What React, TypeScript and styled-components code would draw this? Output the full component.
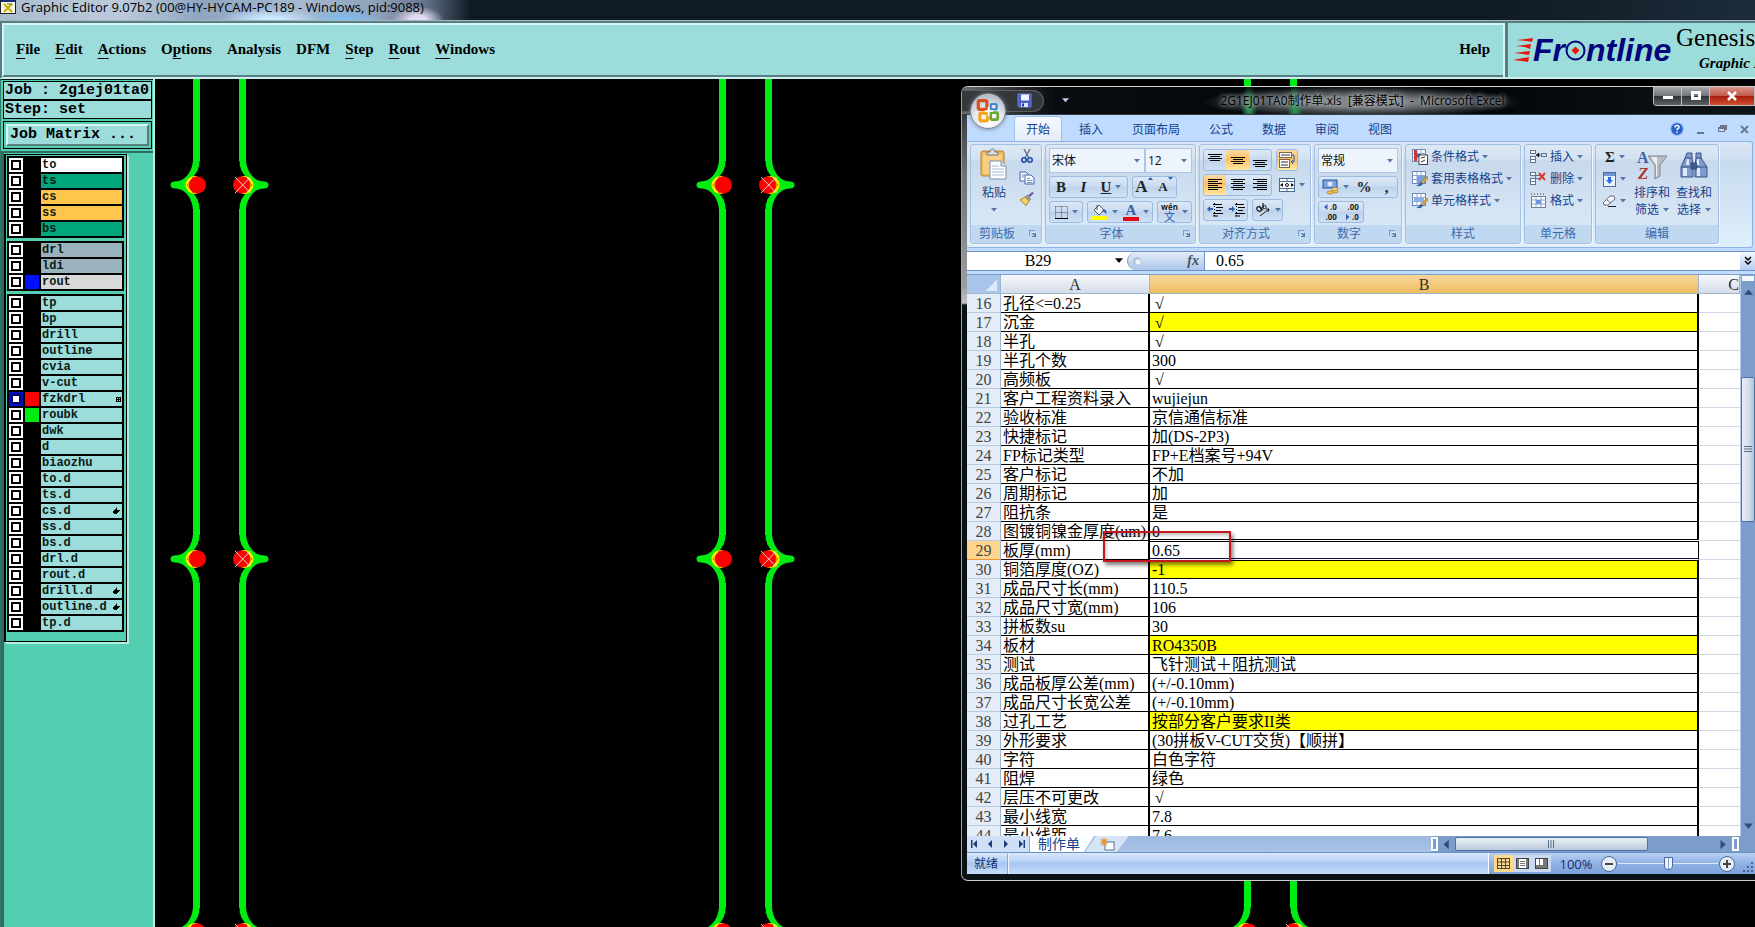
import React from "react";
import styled, { createGlobalStyle, css } from "styled-components";

const Global = createGlobalStyle`
  html, body, #root { height: 100%; }
  body { margin: 0; overflow: hidden; background: #000; }
  *, *::before, *::after { box-sizing: border-box; }
  button, input, select { font: inherit; color: inherit; margin: 0; padding: 0; border: 0; background: none; border-radius: 0; }
`;

const ui = `"Open Sans", "Noto Sans CJK SC", sans-serif`;
const song = `"Liberation Serif", "Noto Sans CJK SC", serif`;
const teal = "#9cdcda";

/* ---------- editor window ---------- */

const Desktop = styled.div`
  position: relative;
  display: flex;
  flex-direction: column;
  min-height: 100vh;
  height: 100%;
  overflow: hidden;
  background: #000;
`;

const EditorTitle = styled.header`
  display: flex;
  align-items: flex-start;
  gap: 5px;
  height: 21px;
  overflow: hidden;
  font: 12px/14px ${ui};
  color: #000;
  border-bottom: 1px solid #a9b8c2;
  background:
    radial-gradient(ellipse 26px 14px at 418px 20px, #e4dcf2 30%, transparent 100%),
    radial-gradient(ellipse 40px 12px at 345px 20px, #7cbcf0 10%, transparent 100%),
    radial-gradient(ellipse 50px 12px at 270px 20px, #cdeaff 20%, transparent 100%),
    linear-gradient(90deg, #a9bccd 0, #bccbdc 120px, #8fa5bf 200px, #a5bad2 300px, #8f9fb8 380px, #64748a 425px, #101a24 470px, #0f1a24 85%, #1c2c3a 100%);
`;

const EditorName = styled.h1`
  margin: 0;
  font: inherit;
  font-size: 13px;
  white-space: nowrap;
`;

const TopBars = styled.div`
  display: flex;
  height: 58px;
  border-top: 2px solid #567e80;
  border-bottom: 2px solid #c9f0ee;
  border-left: 2px solid #567e80;
  background: ${teal};
`;

const MenuBar = styled.nav`
  display: flex;
  flex: 1;
  align-items: center;
  gap: 15px;
  min-width: 0;
  padding: 0 13px 2px 12px;
  font: bold 15px/20px "Liberation Serif", serif;
  border-top: 2px solid #d6f6f4;
  border-left: 2px solid #d6f6f4;
  border-right: 2px solid #567e80;
  border-bottom: 2px solid #567e80;
`;

const MenuButton = styled.button<{ $last?: boolean }>`
  white-space: nowrap;
  ${(p) => p.$last && css`margin-left: auto;`}
  u { text-decoration-thickness: 1px; text-underline-offset: 4px; text-decoration-skip-ink: none; }
`;

const LogoPanel = styled.div`
  display: flex;
  width: 250px;
  padding-left: 5px;
  overflow: hidden;
  border-left: 3px solid #567e80;
  box-shadow: -2px 0 0 #d6f6f4;
`;

const LogoMark = styled.div`
  display: flex;
  align-items: center;
  flex: none;
  width: 163px;
  font: italic bold 32px/54px "Liberation Sans", sans-serif;
  color: #04047c;
`;

const LogoText = styled.div`
  flex: none;
  display: flex;
  flex-direction: column;
`;

const Product = styled.div`
  font: 25px/30px "Liberation Serif", serif;
`;

const ProductSub = styled.div`
  padding-left: 23px;
  font: italic bold 15px/20px "Liberation Serif", serif;
  white-space: nowrap;
`;

const Work = styled.div`
  display: flex;
  flex: 1;
  min-height: 0;
`;

const Sidebar = styled.aside`
  flex: none;
  width: 155px;
  background: #53ceb0;
  border-left: 1px solid #2f7a69;
  border-right: 2px solid #b0f0e0;
  font-family: "Liberation Mono", monospace;
`;

const JobPanel = styled.div`
  padding: 1px 1px 2px 2px;
  border: solid #001a10;
  border-width: 1px 0 0;
  border-bottom: 2px solid #2f6b60;
`;

const JobLine = styled.div`
  padding-left: 1px;
  font-size: 15px;
  font-weight: bold;
  line-height: 17px;
  white-space: nowrap;
  border: 1px solid #000;
  background: ${teal};
`;

const MatrixFrame = styled.div`
  margin-top: 2px;
  padding: 2px;
  border: 1px solid #000;
`;

const MatrixButton = styled.button`
  display: block;
  width: 100%;
  padding-left: 2px;
  font-size: 15px;
  font-weight: bold;
  line-height: 18px;
  text-align: left;
  background: ${teal};
  border: 2px solid #d6f6f4;
  border-right-color: #567e80;
  border-bottom-color: #567e80;
`;

const LayerWell = styled.div`
  height: 100%;
  border-left: 3px solid #35685f;
  padding-top: 1px;
`;

const LayerFrame = styled.div`
  display: flex;
  flex-direction: column;
  gap: 3px;
  width: 123px;
  padding: 1px 2px 9px 1px;
  border: 1px solid #000;
  border-left-width: 2px;
  box-shadow: 1px 1px 0 #b0f0e0, 2px 2px 0 #b0f0e0;
`;

const LayerGroup = styled.ul`
  display: flex;
  flex-direction: column;
  gap: 2px;
  margin: 0;
  padding: 2px;
  list-style: none;
  background: #000;
`;

const LayerRow = styled.li`
  display: grid;
  grid-template-columns: 14px 14px 1fr;
  gap: 2px;
  height: 14px;
`;

const LayerCheck = styled.input<{ $active?: boolean }>`
  appearance: none;
  width: 14px;
  height: 14px;
  background: #fff;
  box-shadow: inset 0 0 0 2px ${(p) => (p.$active ? "#0010c0" : "#fff")}, inset 0 0 0 4px ${(p) => (p.$active ? "#000070" : "#000")};
`;

const Swatch = styled.span<{ $color: string }>`
  background: ${(p) => p.$color};
`;

const LayerName = styled.label<{ $bg: string }>`
  display: flex;
  align-items: center;
  justify-content: space-between;
  padding: 0 1px;
  font-size: 12px;
  font-weight: bold;
  line-height: 14px;
  color: #0a1a18;
  background: ${(p) => p.$bg};
`;

const Board = styled.svg`
  flex: 1;
  min-width: 0;
  height: 100%;
  background: #000;
`;

type Layer = { n: string; bg?: string; c?: string; mark?: "hand" | "grid" };

const layerGroups: Layer[][] = [
  [
    { n: "to", bg: "#ffffff" },
    { n: "ts", bg: "#00a67c" },
    { n: "cs", bg: "#ffc64e" },
    { n: "ss", bg: "#ffc64e" },
    { n: "bs", bg: "#00a67c" },
  ],
  [
    { n: "drl", bg: "#9bb3bd" },
    { n: "ldi", bg: "#9bb3bd" },
    { n: "rout", bg: "#d9d9d9", c: "#0010ff" },
  ],
  [
    { n: "tp" }, { n: "bp" }, { n: "drill" }, { n: "outline" }, { n: "cvia" }, { n: "v-cut" },
    { n: "fzkdrl", c: "#ff0000", mark: "grid" },
    { n: "roubk", c: "#00ec12" },
    { n: "dwk" }, { n: "d" }, { n: "biaozhu" }, { n: "to.d" }, { n: "ts.d" },
    { n: "cs.d", mark: "hand" },
    { n: "ss.d" }, { n: "bs.d" }, { n: "drl.d" }, { n: "rout.d" },
    { n: "drill.d", mark: "hand" },
    { n: "outline.d", mark: "hand" },
    { n: "tp.d" },
  ],
];

const HandMark = () => (
  <svg width="8" height="8" viewBox="0 0 8 8">
    <path d="M3 1L4 0V3H7V4H6V5H5V6H4V7H1V6H0V4H1V3H2V2H3Z" fill="#000" />
  </svg>
);
const GridMark = () => (
  <svg width="5" height="5" viewBox="0 0 5 5" shapeRendering="crispEdges">
    <path d="M0 0h5v5H0zM1 1v1h1V1zM3 1v1h1V1zM1 3v1h1V3zM3 3v1h1V3z" fill="#000" fillRule="evenodd" />
  </svg>
);

const Half = () => (
  <>
    <path
      d="M-3.500 -25C-4 -14 -11 -5 -18 -4C-21 -3.500 -26 -4 -26 0C-26 4 -21 3.500 -18 4C-11 5 -4 14 -3.500 25H3.500C3 14 -2 9 -8 4V-4C-2 -9 3 -14 3.500 -25Z"
      fill="#00ec12"
    />
    <path d="M3.500 -24V-20M2.500 -18V-15M1 -13L-1 -10M3.500 24V20M2.500 18V15M1 13L-1 10" stroke="#000" strokeWidth="1" fill="none" />
    <circle cx="-2" cy="0" r="9" fill="#ffe600" />
    <circle cx="1" cy="0" r="8.500" fill="#ff0000" />
    <path d="M-3 -8L-9 0L-3 8" stroke="#b00000" strokeDasharray="2 1" fill="none" />
  </>
);

const BoardView = () => (
  <Board aria-label="board">
    <g transform="translate(-155 -79)">
      {[196.5, 722.5, 1247.5].map((x) => (
        <g key={x} transform={`translate(${x} 0)`}>
          {[0, 46].map((dx) => (
            <g key={dx} fill="#00ec12">
              <rect x={dx - 3.5} y="79" width="7" height="82" />
              <rect x={dx - 3.5} y="209" width="7" height="326" />
              <rect x={dx - 3.5} y="583" width="7" height="325" />
            </g>
          ))}
          {[185, 559, 932].map((y) => (
            <g key={y} transform={`translate(0 ${y})`}>
              <Half />
              <g transform="translate(46 0) scale(-1 1)"><Half /></g>
              <path d="M38.500 -8L54 8M54 -8L38.500 8" stroke="#d8d8d8" strokeWidth="1" />
            </g>
          ))}
        </g>
      ))}
    </g>
  </Board>
);

/* ---------- spreadsheet window ---------- */

const Excel = styled.section`
  position: absolute;
  left: 961px;
  right: 0;
  top: 86px;
  bottom: 46px;
  display: flex;
  flex-direction: column;
  border-top: 1px solid #cfd4d6;
  border-left: 1px solid #9aa4a8;
  border-bottom: 1px solid #c8cccf;
  border-radius: 7px 0 0 7px;
  background: linear-gradient(180deg, #202326 0, #6f7477 90px, #9b9fa1 200px, #c4c6c8 216px, #0b1216 218px, #0b1216 100%);
  font: 12px/16px ${ui};
  color: #15428b;
`;

const XTitle = styled.header`
  display: flex;
  height: 27px;
  border-radius: 6px 0 0 0;
  background:
    radial-gradient(ellipse 8px 22px at 287px 20px, #2a8c50 20%, transparent 100%),
    radial-gradient(ellipse 8px 22px at 333px 20px, #2a8c50 20%, transparent 100%),
    radial-gradient(ellipse 160px 16px at 400px 15px, #7c8286 30%, transparent 100%),
    linear-gradient(90deg, #6a6e70 0, #24282a 60px, #0a0d0f 90px, #000408 60%, #0e1418 100%);
`;

const QuickBar = styled.div`
  display: flex;
  align-items: center;
  gap: 18px;
  width: 110px;
`;

const QuickPill = styled.span`
  display: flex;
  align-items: center;
  justify-content: flex-end;
  width: 82px;
  height: 22px;
  padding-right: 11px;
  border: 1px solid #5a6064;
  border-left: 0;
  border-radius: 0 11px 11px 0;
  background: #34383b;
`;

const OfficeOrb = styled.button`
  position: absolute;
  left: 8px;
  top: 6px;
  width: 36px;
  height: 36px;
  display: grid;
  place-items: center;
  border-radius: 18px;
  border: 1px solid #7c868e;
  background: radial-gradient(circle at 50% 80%, #fff 0, #e6eaef 45%, #b4bcc6 80%, #eef1f4 100%);
  box-shadow: 0 0 4px #6a747e;
`;

const XName = styled.h2`
  flex: 1;
  margin: 0;
  min-width: 0;
  text-align: center;
  white-space: pre;
  font: 12px/27px ${ui};
  color: #000;
  text-shadow: 0 0 4px #b8bcc0, 0 0 6px #a8aeb2;
`;

const WinButtons = styled.div`
  display: flex;
  height: 19px;
  width: 102px;
  border: 1px solid #b9bfc2;
  border-top: 0;
  border-right: 0;
  border-radius: 0 0 0 4px;
  overflow: hidden;
`;

const WinButton = styled.button<{ $close?: boolean }>`
  flex: ${(p) => (p.$close ? "1 1 0" : "0 0 28px")};
  display: grid;
  place-items: center;
  border-right: 1px solid #b9bfc2;
  background: ${(p) =>
    p.$close
      ? "linear-gradient(180deg, #d9938a 0, #c2594c 48%, #a41c0c 50%, #d0502e 100%)"
      : "linear-gradient(180deg, #a4a9ac 0, #70767a 48%, #2c3236 50%, #5a6064 100%)"};
`;

const XBody = styled.div`
  display: flex;
  flex: 1;
  flex-direction: column;
  min-height: 0;
  margin: 1px 0 6px 5px;
  background: #bfdbff;
`;

const Tabs = styled.nav`
  display: flex;
  align-items: flex-end;
  gap: 7px;
  height: 26px;
  padding: 0 6px 0 48px;
`;

const Tab = styled.button<{ $on?: boolean }>`
  height: 24px;
  padding: 0 11px;
  line-height: 23px;
  white-space: nowrap;
  ${(p) =>
    p.$on &&
    css`
      background: linear-gradient(180deg, #f6faff, #e2ecf8);
      border-radius: 3px 3px 0 0;
      box-shadow: 0 0 0 1px #9cc0ee;
    `}
`;

const TabTools = styled.div`
  display: flex;
  align-items: center;
  gap: 13px;
  height: 24px;
  margin-left: auto;
`;

const Ribbon = styled.div`
  display: flex;
  gap: 3px;
  height: 107px;
  margin-right: 2px;
  padding: 2px 3px;
  border: 1px solid #8db2e3;
  border-left-width: 0;
  border-radius: 3px;
  background: linear-gradient(180deg, #dbe6f4 0, #cfdff0 18px, #c7daee 20px, #dff0fb 100%);
`;

const Group = styled.section<{ $w: number }>`
  display: flex;
  flex-direction: column;
  flex: none;
  width: ${(p) => p.$w}px;
  height: 100px;
  border: 1px solid #a3c0e2;
  border-radius: 3px;
  overflow: hidden;
  background: linear-gradient(180deg, #dde8f5 0, #d3e1f1 14px, #c8d9ed 16px, #d9e8f6 80px);
  box-shadow: 1px 1px 0 #eef6fd;
`;

const GroupBody = styled.div<{ $pad?: string }>`
  display: flex;
  flex: 1;
  min-height: 0;
  padding: ${(p) => p.$pad || "3px"};
`;

const GroupLabel = styled.div<{ $launch?: boolean }>`
  display: flex;
  align-items: center;
  gap: 6px;
  height: 18px;
  padding-right: ${(p) => (p.$launch ? 4 : 0)}px;
  line-height: 18px;
  color: #3e6aaa;
  background: #c0d8f0;
  span { flex: 1; text-align: center; }
`;

const Stack = styled.div<{ $gap?: number }>`
  display: flex;
  flex-direction: column;
  gap: ${(p) => p.$gap ?? 3}px;
  flex: 1;
`;

const Line = styled.div<{ $gap?: number }>`
  display: flex;
  gap: ${(p) => p.$gap ?? 4}px;
`;

const Combo = styled.span<{ $w: number }>`
  display: flex;
  align-items: center;
  width: ${(p) => p.$w}px;
  height: 25px;
  padding: 0 4px 0 2px;
  border: 1px solid #abc6ea;
  background: #eef4fc;
  color: #111;
  select { appearance: none; flex: 1; min-width: 0; height: 23px; outline: 0; }
`;

const BtnSet = styled.div<{ $bare?: boolean }>`
  display: flex;
  height: 22px;
  overflow: hidden;
  ${(p) =>
    !p.$bare &&
    css`
      border: 1px solid #9bbbe0;
      border-radius: 3px;
      background: linear-gradient(180deg, #dce8f6 0, #cadcf1 45%, #bdd2ec 50%, #cfe1f5 100%);
    `}
`;

const Btn = styled.button<{ $w: number; $on?: boolean }>`
  display: flex;
  align-items: center;
  justify-content: center;
  gap: 4px;
  flex: none;
  width: ${(p) => p.$w}px;
  font: bold 15px/18px "Liberation Serif", serif;
  color: #222;
  ${(p) => p.$on && css`background: linear-gradient(180deg, #fbdba8 0, #fdbf66 45%, #ffe9a0 100%);`}
`;

const BigBtn = styled.button<{ $w: number }>`
  display: flex;
  flex-direction: column;
  align-items: center;
  flex: none;
  width: ${(p) => p.$w}px;
  line-height: 17px;
  span { display: flex; align-items: center; gap: 4px; height: 17px; white-space: nowrap; }
`;

const BigIcon = styled.div`
  height: 36px;
`;

const ListBtn = styled.button`
  display: flex;
  align-items: center;
  gap: 3px;
  height: 22px;
  white-space: nowrap;
`;

const FormulaBar = styled.div`
  display: flex;
  height: 20px;
  margin: 3px 0;
  background: #fff;
  border-top: 1px solid #6c93c4;
  border-bottom: 1px solid #6c93c4;
  color: #000;
  font: 16px/18px ${song};
`;

const NameBox = styled.span`
  display: flex;
  align-items: center;
  width: 160px;
  padding-right: 4px;
  input { flex: 1; min-width: 0; padding-right: 6px; text-align: center; outline: 0; height: 18px; }
`;

const FxArea = styled.span`
  display: flex;
  align-items: center;
  justify-content: space-between;
  width: 78px;
  padding: 0 5px 0 5px;
  border-radius: 9px 0 0 9px;
  border-right: 1px solid #6c93c4;
  border-left: 1px solid #7d9cc8;
  background: linear-gradient(180deg, #e3edfa, #adc6e9);
  button { font: italic bold 14px/16px "Liberation Serif", serif; color: #4a5260; }
`;

const Formula = styled.input`
  flex: 1;
  min-width: 0;
  padding: 0 11px !important;
  outline: 0;
`;

const Expander = styled.button`
  display: grid;
  place-items: center;
  width: 15px;
  background: linear-gradient(180deg, #f3f8ff, #b4cdf0);
`;

const SheetArea = styled.div`
  display: flex;
  flex: 1;
  min-height: 0;
  border-top: 1px solid #7d9fce;
  background: #fff;
`;

const SheetClip = styled.div`
  flex: 1;
  min-width: 0;
  overflow: hidden;
`;

const Sheet = styled.table`
  width: 100%;
  table-layout: fixed;
  border-collapse: separate;
  border-spacing: 0;
  color: #000;
  font: 16px/16px ${song};
  th, td { height: 19px; padding: 2px 0 0; overflow: hidden; white-space: nowrap; }
`;

const ColHead = styled.th<{ $on?: boolean; $corner?: boolean; $end?: boolean }>`
  font-weight: normal;
  color: #333;
  text-align: ${(p) => (p.$end ? "right" : "center")};
  border-right: 1px solid #9eb6ce;
  border-bottom: 1px solid #9eb6ce;
  background: ${(p) =>
    p.$on
      ? "linear-gradient(180deg, #f8d59b, #efbe62)"
      : p.$corner
        ? "linear-gradient(135deg, transparent 66%, #dbe9fb 66%) 10px 2px / 20px 14px no-repeat, #a9c4e9"
        : "linear-gradient(180deg, #f6f9fc, #d3dbe9)"};
`;

const RowHead = styled.th<{ $on?: boolean }>`
  font-weight: normal;
  color: #444;
  background: ${(p) => (p.$on ? "#ffd58d" : "#e3ecf7")};
  border-right: 1px solid #9eb6ce;
  border-bottom: 1px solid ${(p) => (p.$on ? "#f29536" : "#b9cbe0")};
`;

const CellA = styled.td`
  padding-left: 2px !important;
  border-right: 2px solid #000;
  border-bottom: 1px solid #000;
`;

const CellB = styled.td<{ $fill?: boolean; $sel?: boolean; $tick?: boolean }>`
  padding-left: ${(p) => (p.$tick ? 5 : 2)}px !important;
  border-right: 2px solid #000;
  border-bottom: 1px solid #000;
  ${(p) => p.$fill && css`background: #ffff00;`}
  ${(p) =>
    p.$sel &&
    css`
      position: relative;
      border-bottom-color: #fff;
      border-right: 1px solid #000;
      background: #fff;
      box-shadow: 0 -1px 0 #fff, 0 -2px 0 #000, inset 0 1px 0 #000, inset 0 -1px 0 #0a0a50, 0 1px 0 #000;
    `}
`;

const CellC = styled.td`
  border-bottom: 1px solid #d0d7e5;
`;

const VScroll = styled.div`
  display: flex;
  flex-direction: column;
  align-items: center;
  width: 15px;
  padding: 0 0 5px;
  background: #7c9ccb;
  border-left: 1px solid #b5cdec;
`;

const VThumb = styled.div`
  display: grid;
  place-items: center;
  width: 14px;
  height: 145px;
  margin: 80px 0 auto;
  border: 1px solid #4f6fa5;
  border-radius: 2px;
  background: linear-gradient(90deg, #e8eff8, #d3dde9 60%, #b4c4d9);
`;

const VSplit = styled.div`
  width: 14px;
  height: 7px;
  margin-bottom: 6px;
  border: 1px solid #7d9fce;
  background: #f4f8fd;
`;

const SheetTabs = styled.div`
  display: flex;
  height: 16px;
  background: linear-gradient(180deg, #9db9e0, #a8c2e6);
`;

const NavSet = styled.div`
  display: flex;
  width: 63px;
  background: #cfe0f6;
  border-right: 1px solid #8aa8d2;
`;

const NavBtn = styled.button`
  flex: 1;
  display: grid;
  place-items: center;
`;

const SheetTab = styled.button`
  width: 64px;
  padding: 0 14px 0 8px;
  font-size: 14px;
  line-height: 16px;
  white-space: nowrap;
  background: #fff;
  clip-path: polygon(0 0, 100% 0, 84% 100%, 0 100%);
`;

const NewSheet = styled.button`
  display: grid;
  place-items: center;
  width: 44px;
  margin-left: -9px;
  background: #d5e4f7;
  clip-path: polygon(25% 0, 100% 0, 72% 100%, 0 100%);
`;

const HScroll = styled.div`
  display: flex;
  align-items: center;
  gap: 4px;
  width: 324px;
  margin-left: auto;
  padding-right: 16px;
  background: #7c9ccb;
`;

const HThumb = styled.div`
  display: grid;
  place-items: center;
  width: 193px;
  height: 14px;
  border: 1px solid #4f6fa5;
  border-radius: 2px;
  background: linear-gradient(180deg, #e8eff8, #d3dde9 50%, #bac9dd);
`;

const ScrollEnd = styled.div`
  display: flex;
  align-items: center;
  gap: 4px;
  margin-left: auto;
`;

const SplitHandle = styled.div`
  width: 7px;
  height: 14px;
  border: 2px solid #fff;
  background: #7c9ccb;
`;

const Status = styled.footer`
  display: flex;
  align-items: center;
  height: 22px;
  padding-left: 7px;
  color: #15306b;
  border-top: 1px solid #6c93c4;
  background: linear-gradient(180deg, #d8e7fb 0, #bdd5f7 35%, #a8c7f1 50%, #c7defa 100%);
`;

const StatusTools = styled.div`
  display: flex;
  align-items: center;
  height: 21px;
  margin-left: auto;
  padding: 0 1px 0 5px;
  border-left: 1px solid #fff;
  background: linear-gradient(180deg, #b9d1f4 0, #8fb1e4 50%, #7da3dc 100%);
`;

const StatusRule = styled.span`
  width: 2px;
  height: 20px;
  margin-left: 9px;
  border-left: 1px solid #86a8da;
  border-right: 1px solid #eef5ff;
`;

const ViewBtn = styled.button<{ $on?: boolean }>`
  display: grid;
  place-items: center;
  width: 19px;
  height: 17px;
  background: ${(p) => (p.$on ? "#ffd98a" : "#c9daf1")};
`;

const ZoomText = styled.button`
  width: 50px;
  font: 13px/18px ${ui};
`;

const RoundBtn = styled.button`
  display: grid;
  place-items: center;
  width: 16px;
  height: 16px;
  border: 1px solid #476a9e;
  border-radius: 8px;
  background: #e6eef9;
`;

const Zoom = styled.input`
  appearance: none;
  width: 100px;
  height: 16px;
  margin: 0 1px !important;
  background: linear-gradient(#dfeafa, #dfeafa) center / 100% 1px no-repeat;
  &::-webkit-slider-thumb {
    appearance: none;
    width: 9px;
    height: 13px;
    border: 1px solid #49699c;
    border-radius: 1px 1px 5px 5px;
    background: linear-gradient(90deg, #eef4fc 3px, #8aa2c8 3px, #8aa2c8 4px, #eef4fc 4px);
  }
`;

const Grip = styled.svg`
  margin: 6px 0 0 7px;
`;

const RedMark = styled.div`
  position: absolute;
  left: 1103px;
  top: 531px;
  width: 128px;
  height: 31px;
  border: 2px solid #c4161c;
  box-shadow: 2px 3px 4px rgba(0, 0, 0, 0.5), inset 1px 2px 4px rgba(0, 0, 0, 0.3);
  pointer-events: none;
`;

/* ---------- icons ---------- */

const Arrow = ({ c = "#5577a8", dir = "down", s = 6 }: { c?: string; dir?: "down" | "up" | "left" | "right"; s?: number }) => {
  const d = { down: "M0 1H6L3 4.500Z", up: "M0 4.500H6L3 1Z", left: "M4.500 0V6L1 3Z", right: "M1 0V6L4.500 3Z" }[dir];
  return (
    <svg width={s} height={s} viewBox="0 0 6 6">
      <path d={d} fill={c} />
    </svg>
  );
};

const Bars = ({ rows, w = 14 }: { rows: [number, number, number][]; w?: number }) => (
  <svg width={w} height="14" viewBox={`0 0 ${w} 14`} shapeRendering="crispEdges">
    {rows.map(([x, y, l], i) => (
      <rect key={i} x={x} y={y} width={l} height="1" fill="#000" />
    ))}
  </svg>
);

const Launcher = () => (
  <svg width="8" height="8" viewBox="0 0 8 8" shapeRendering="crispEdges">
    <path d="M0 0H6V1H1V6H0Z" fill="#7d9cc8" />
    <path d="M7 3V7H3V6H5L2 3L3 2L6 5V3Z" fill="#5577a8" />
    <path d="M3 2H4V3H3Z" fill="#fff" />
  </svg>
);

const OfficeLogo = () => (
  <svg width="26" height="26" viewBox="0 0 24 24" fill="none">
    <rect x="3" y="2.500" width="8" height="8" rx="1.500" stroke="#d8501c" strokeWidth="3" />
    <rect x="14.500" y="5.500" width="5.500" height="5" rx="1" stroke="#3f86cf" strokeWidth="2" />
    <rect x="4.500" y="14" width="7" height="7" rx="1.500" stroke="#f2a71c" strokeWidth="3" />
    <rect x="14.500" y="13.500" width="6.500" height="6.500" rx="1" stroke="#6ca832" strokeWidth="2.500" />
    <path d="M9 12H17M12.500 8V17" stroke="#fff" strokeWidth="1.500" />
  </svg>
);

const SaveIcon = () => (
  <svg width="15" height="15" viewBox="0 0 15 15">
    <path d="M1 1H14V14H2L1 13Z" fill="#4a5fc4" stroke="#6f80d8" />
    <rect x="4" y="1.500" width="8" height="6" fill="#f2f5ff" />
    <rect x="4" y="10" width="7" height="4" fill="#dfe4fa" />
    <rect x="5" y="10.500" width="2" height="3" fill="#27348b" />
  </svg>
);

const PasteIcon = () => (
  <svg width="28" height="32" viewBox="0 0 28 32">
    <rect x="1" y="3" width="23" height="25" rx="2" fill="#f0b95a" stroke="#b98433" />
    <rect x="3" y="6" width="19" height="20" fill="#f7cf83" />
    <path d="M7 7V4H10C10 0 15 0 15 4H18V7Z" fill="#d9dde2" stroke="#70777f" />
    <path d="M10 13H21L26 18V31H10Z" fill="#fff" stroke="#7890b4" />
    <path d="M21 13V18H26" fill="#dfe8f5" stroke="#7890b4" />
    <path d="M12 18H19M12 21H24M12 24H24M12 27H24" stroke="#a9b9d2" />
  </svg>
);
const CutIcon = () => (
  <svg width="14" height="16" viewBox="0 0 14 16" fill="none">
    <path d="M4 1L9 10M10 1L5 10" stroke="#6a7484" strokeWidth="1.500" />
    <circle cx="4" cy="12" r="2.200" stroke="#2a57a8" strokeWidth="1.700" />
    <circle cx="10" cy="12" r="2.200" stroke="#2a57a8" strokeWidth="1.700" />
  </svg>
);
const CopyIcon = () => (
  <svg width="16" height="14" viewBox="0 0 16 14">
    <path d="M1 1H7L9 3V10H1Z" fill="#fff" stroke="#3f66a8" />
    <path d="M6 4H12L15 7V13H6Z" fill="#fff" stroke="#3f66a8" />
    <path d="M2.500 4H6M2.500 6H5M8 7.500H11M8 9.500H13.500M8 11.500H13.500" stroke="#6f93c9" />
  </svg>
);
const BrushIcon = () => (
  <svg width="16" height="14" viewBox="0 0 16 14">
    <path d="M15 1L11 5L9 3.500L13 0Z" fill="#6b5aa0" />
    <path d="M8 3L12 7L10 9L6 5Z" fill="#999" stroke="#666" strokeWidth=".5" />
    <path d="M6 5L10 9L7 13.500L1 8Z" fill="#f5d566" stroke="#a8872a" />
  </svg>
);
const BorderIcon = () => (
  <svg width="13" height="13" viewBox="0 0 13 13">
    <path d="M.5 .5H12.500M.5 6.500H12.500M.5 .5V12M6.500 .5V12M12.500 .5V12" stroke="#555" strokeDasharray="1 1" />
    <path d="M0 12.500H13" stroke="#000" />
  </svg>
);
const FillIcon = () => (
  <svg width="17" height="16" viewBox="0 0 17 16">
    <path d="M3 6L8 1L13 6L8 11Z" fill="#f1f4f9" stroke="#556" />
    <path d="M6 1V6" stroke="#556" />
    <path d="M12 5C15 5 16 8 15 10C14 9 13 7 11 8Z" fill="#2f62b5" />
    <rect x="0" y="12" width="16" height="4" fill="#ffff00" />
  </svg>
);
const MergeIcon = () => (
  <svg width="16" height="14" viewBox="0 0 16 14">
    <rect x=".5" y=".5" width="15" height="13" fill="#fff" stroke="#4b6a96" />
    <path d="M.5 3.500H15.500M.5 10.500H15.500M8 0V3M8 11V14" stroke="#4b6a96" />
    <path d="M1 7L4 5V9ZM15 7L12 5V9Z" fill="#111" />
    <circle cx="8" cy="7" r="1.500" stroke="#111" fill="none" />
  </svg>
);
const WrapIcon = () => (
  <svg width="16" height="16" viewBox="0 0 16 16" fill="none">
    <rect x=".5" y=".5" width="12" height="5" fill="#fff" stroke="#7a6a50" />
    <rect x=".5" y="7.500" width="10" height="8" fill="#fff" stroke="#7a6a50" />
    <path d="M2 3H11M2 10H9M2 13H9" stroke="#333" />
    <path d="M13 3H15V10H12M14 8L12 10L14 12" stroke="#2f62b5" />
  </svg>
);
const IndentIcon = ({ out }: { out?: boolean }) => (
  <svg width="16" height="14" viewBox="0 0 16 14">
    <path d="M6 1.500H15M9 4.500H16M9 7.500H14M6 10.500H16M6 13H11" stroke="#000" />
    <path d="M7.500 0V14" stroke="#000" strokeDasharray="1 2" />
    <path d={out ? "M0 6L3 3V5H6V7H3V9Z" : "M6 6L3 3V5H0V7H3V9Z"} fill="#2f62b5" />
  </svg>
);
const OrientIcon = () => (
  <svg width="16" height="14" viewBox="0 0 16 14" fill="none" stroke="#222">
    <path d="M5 13L14 6M14 6L11 6M14 6L13 9" />
    <ellipse cx="4" cy="6" rx="2.500" ry="2" transform="rotate(45 4 6)" strokeWidth="1.300" />
    <path d="M4 3L8 7" strokeWidth="1.300" />
    <path d="M8 0L8 5" strokeWidth="1.300" />
    <circle cx="9.500" cy="4" r="1.700" />
  </svg>
);
const MoneyIcon = () => (
  <svg width="17" height="16" viewBox="0 0 17 16">
    <rect x="1" y="1" width="14" height="8" fill="#7ea3dc" stroke="#27509b" />
    <circle cx="8" cy="5" r="2.500" fill="#dbe8fb" />
    <ellipse cx="8" cy="13.500" rx="3" ry="1.500" fill="#f4c64e" stroke="#a57813" strokeWidth=".7" />
    <ellipse cx="13" cy="12.500" rx="3" ry="1.500" fill="#f4c64e" stroke="#a57813" strokeWidth=".7" />
    <ellipse cx="13" cy="10" rx="3" ry="1.500" fill="#ffe08a" stroke="#a57813" strokeWidth=".7" />
  </svg>
);
const GridIcon = ({ kind }: { kind: "cond" | "table" | "style" }) => (
  <svg width="16" height="16" viewBox="0 0 16 16">
    <rect x=".5" y=".5" width="13" height="12" fill="#fff" stroke="#6b87b5" />
    <path d="M.5 4.500H13.500M.5 8.500H13.500M5 .5V12.500M9 .5V12.500" stroke="#8ea8d0" />
    {kind === "cond" && (
      <>
        <path d="M2 1H5V12H2Z" fill="#cc3b3b" />
        <path d="M5 5H9V8H5Z" fill="#3d67b8" />
        <rect x="7" y="6" width="8.500" height="9.500" fill="#fff" stroke="#444" />
        <path d="M9 9L13 8M9 13L13 11" stroke="#333" />
      </>
    )}
    {kind !== "cond" && (
      <>
        {kind === "table" ? <path d="M5 4.500H13V12H5Z" fill="#7d9fd8" /> : <path d="M2 4.500H12V8.500H2Z" fill="#8fb0e2" />}
        <path d="M15 5L9 11L11 13L16 7Z" fill="#dca64a" stroke="#8d6a28" strokeWidth=".6" />
        <path d="M9 11L11 13C9 16 6 15 4 15C7 14 7 12 9 11Z" fill="#2f62b5" />
      </>
    )}
  </svg>
);
const CellsIcon = ({ kind }: { kind: "ins" | "del" | "fmt" }) => (
  <svg width="17" height="16" viewBox="0 0 17 16">
    {kind === "fmt" ? (
      <>
        <rect x="1.500" y="3.500" width="14" height="11" fill="#fff" stroke="#6b7f9f" />
        <path d="M1.500 7H15.500M1.500 11H15.500M6 3.500V14.500M11 3.500V14.500" stroke="#8ea8d0" />
        <rect x="6" y="7" width="5" height="4" fill="#6c95dc" />
        <path d="M1 1H16" stroke="#333" strokeDasharray="1 2" />
      </>
    ) : (
      <>
        <rect x=".5" y="1.500" width="5" height="3" fill="#fff" stroke="#5f7292" />
        <rect x=".5" y="7.500" width="5" height="3" fill="#fff" stroke="#5f7292" />
        <rect x=".5" y="10.500" width="5" height="3" fill="#fff" stroke="#5f7292" />
        {kind === "ins" ? (
          <>
            <path d="M6 6L9 4V8ZM9 6H11" fill="#111" stroke="#111" strokeWidth=".5" />
            <rect x="11.500" y="4.500" width="5" height="3" fill="#cfe0f8" stroke="#5f7292" />
          </>
        ) : (
          <>
            <rect x="5.500" y="4.500" width="5" height="3" fill="#cfe0f8" stroke="#5f7292" />
            <path d="M9 2L15 9M15 2L9 9" stroke="#e0392b" strokeWidth="2" />
          </>
        )}
      </>
    )}
  </svg>
);
const FunnelIcon = () => (
  <svg width="30" height="32" viewBox="0 0 30 32">
    <text x="0" y="14" fontFamily="Liberation Serif" fontWeight="bold" fontSize="16" fill="#3d5fa8">A</text>
    <text x="1" y="30" fontFamily="Liberation Serif" fontWeight="bold" fontStyle="italic" fontSize="17" fill="#a83a30">Z</text>
    <path d="M11 7H30L23 16V27L18 30V16Z" fill="#b9bec5" stroke="#80868f" />
    <path d="M14 8H20L20 27L19 28V16Z" fill="#eef0f2" />
  </svg>
);
const BinocularIcon = () => (
  <svg width="30" height="32" viewBox="0 -4 30 32" fill="#7f9bcb" stroke="#3a5288">
    <path d="M8 0H13V5L14 12V24H2V14L6 5Z" />
    <path d="M17 0H22V5L28 14V24H16V12L17 5Z" />
    <rect x="12" y="10" width="6" height="6" fill="#3f5a92" />
    <path d="M4 15H8V23H4ZM18 15H21V23H18ZM8 6H10V12H7ZM18 6H20V12H18Z" fill="#dfe8f8" stroke="none" />
    <path d="M2 14H14M16 14H28M7 5H13M17 5H23" />
  </svg>
);
const DownBox = () => (
  <svg width="13" height="15" viewBox="0 0 13 15">
    <rect x=".5" y=".5" width="12" height="14" fill="#eaf2fd" stroke="#4a6ca8" />
    <rect x="1" y="1" width="11" height="3" fill="#6f95d4" />
    <path d="M5 5H8V8H10L6.500 12L3 8H5Z" fill="#2c6be0" />
  </svg>
);
const Eraser = () => (
  <svg width="14" height="12" viewBox="0 0 14 12">
    <path d="M1 8L8 1H12L13 4L6 10H2Z" fill="#f4f6fa" stroke="#5c6676" />
    <path d="M5 5L9 8" stroke="#5c6676" />
    <path d="M6 11.500H14" stroke="#222" />
  </svg>
);
const HelpIcon = () => (
  <svg width="14" height="14" viewBox="0 0 14 14">
    <circle cx="7" cy="7" r="6.200" fill="#2b62c9" stroke="#8fb0e8" />
    <path d="M5 5.500C5 3 9 3 9 5.200C9 6.700 7 6.700 7 8.200M7 9.600V11" stroke="#fff" strokeWidth="1.500" fill="none" />
  </svg>
);
const NavIcon = ({ end, flip }: { end?: boolean; flip?: boolean }) => (
  <svg width="8" height="8" viewBox="0 0 8 8">
    <g transform={flip ? "translate(8 0) scale(-1 1)" : undefined} fill="#1b3f7a">
      <path d="M6 0V8L2 4Z" />
      {end && <rect x="0" y="0" width="1.500" height="8" />}
    </g>
  </svg>
);
const SizeMark = ({ up }: { up?: boolean }) => (
  <svg width="5" height="14" viewBox="0 0 5 14">
    <path d={up ? "M0 3H5L2.500 0Z" : "M0 0H5L2.500 3Z"} fill="#2f62b5" />
  </svg>
);

const alignRows: Record<string, [number, number, number][]> = {
  top: [[0, 1, 14], [2, 3, 10], [0, 5, 14], [2, 7, 10]],
  mid: [[0, 4, 14], [2, 6, 10], [0, 8, 14], [2, 10, 10]],
  bot: [[0, 7, 14], [2, 9, 10], [0, 11, 14], [2, 13, 10]],
  left: [[0, 1, 14], [0, 3, 10], [0, 5, 14], [0, 7, 10], [0, 9, 14], [0, 11, 10]],
  center: [[0, 1, 14], [2, 3, 10], [0, 5, 14], [2, 7, 10], [0, 9, 14], [2, 11, 10]],
  right: [[0, 1, 14], [4, 3, 10], [0, 5, 14], [4, 7, 10], [0, 9, 14], [4, 11, 10]],
};

const FontA = styled.span<{ $size: number }>`
  display: flex;
  font-size: ${(p) => p.$size}px;
  line-height: 20px;
`;
const ColorA = styled.span`
  width: 16px;
  height: 18px;
  font: bold 15px/14px "Liberation Serif", serif;
  color: #3d5fa8;
  border-bottom: 4px solid #e30b13;
  text-align: center;
`;
const Wen = styled.span`
  display: flex;
  flex-direction: column;
  align-items: center;
  font: bold 8px/9px ${ui};
  b { font: 11px/11px "Noto Sans CJK SC", sans-serif; color: #2b4ea8; }
`;
const Decimals = styled.span`
  display: flex;
  flex-direction: column;
  font: bold 8px/10px ${ui};
  text-align: right;
  svg { margin-right: 1px; }
`;
const MiniButton = styled.button`
  display: grid;
  place-items: center;
`;

const rows: [number, string, string, boolean?][] = [
  [16, "孔径<=0.25", "√"],
  [17, "沉金", "√", true],
  [18, "半孔", "√"],
  [19, "半孔个数", "300"],
  [20, "高频板", "√"],
  [21, "客户工程资料录入", "wujiejun"],
  [22, "验收标准", "京信通信标准"],
  [23, "快捷标记", "加(DS-2P3)"],
  [24, "FP标记类型", "FP+E档案号+94V"],
  [25, "客户标记", "不加"],
  [26, "周期标记", "加"],
  [27, "阻抗条", "是"],
  [28, "图镀铜镍金厚度(um)", "0"],
  [29, "板厚(mm)", "0.65"],
  [30, "铜箔厚度(OZ)", "-1", true],
  [31, "成品尺寸长(mm)", "110.5"],
  [32, "成品尺寸宽(mm)", "106"],
  [33, "拼板数su", "30"],
  [34, "板材", "RO4350B", true],
  [35, "测试", "飞针测试＋阻抗测试"],
  [36, "成品板厚公差(mm)", "(+/-0.10mm)"],
  [37, "成品尺寸长宽公差", "(+/-0.10mm)"],
  [38, "过孔工艺", "按部分客户要求II类", true],
  [39, "外形要求", "(30拼板V-CUT交货)【顺拼】"],
  [40, "字符", "白色字符"],
  [41, "阻焊", "绿色"],
  [42, "层压不可更改", "√"],
  [43, "最小线宽", "7.8"],
  [44, "最小线距", "7.6"],
];

const RibbonGroup = ({ w, label, pad, launch, children }: { w: number; label: string; pad?: string; launch?: boolean; children: React.ReactNode }) => (
  <Group $w={w}>
    <GroupBody $pad={pad}>{children}</GroupBody>
    <GroupLabel $launch={launch}><span>{label}</span>{launch && <MiniButton aria-label={label}><Launcher /></MiniButton>}</GroupLabel>
  </Group>
);

const RibbonView = () => (
  <Ribbon>
    <RibbonGroup w={72} label="剪贴板" pad="3px 3px 3px 1px" launch>
      <BigBtn $w={44}>
        <BigIcon><PasteIcon /></BigIcon>
        <span>粘贴</span>
        <span><Arrow /></span>
      </BigBtn>
      <Stack $gap={7}>
        <Btn $w={22} aria-label="剪切"><CutIcon /></Btn>
        <Btn $w={22} aria-label="复制"><CopyIcon /></Btn>
        <Btn $w={22} aria-label="格式刷"><BrushIcon /></Btn>
      </Stack>
    </RibbonGroup>
    <RibbonGroup w={151} label="字体" launch>
      <Stack>
        <Line $gap={0}>
          <Combo $w={96}><select aria-label="字体"><option>宋体</option></select><Arrow /></Combo>
          <Combo $w={47}><select aria-label="字号"><option>12</option></select><Arrow /></Combo>
        </Line>
        <Line>
          <BtnSet>
            <Btn $w={22}>B</Btn>
            <Btn $w={23}><em>I</em></Btn>
            <Btn $w={32}><u>U</u><Arrow /></Btn>
          </BtnSet>
          <BtnSet>
            <Btn $w={22}><FontA $size={17}>A<SizeMark up /></FontA></Btn>
            <Btn $w={21}><FontA $size={13}>A<SizeMark /></FontA></Btn>
          </BtnSet>
        </Line>
        <Line>
          <BtnSet><Btn $w={32} aria-label="边框"><BorderIcon /><Arrow /></Btn></BtnSet>
          <BtnSet>
            <Btn $w={32} aria-label="填充"><FillIcon /><Arrow /></Btn>
            <Btn $w={32}><ColorA>A</ColorA><Arrow /></Btn>
          </BtnSet>
          <BtnSet><Btn $w={33}><Wen>wén<b>文</b></Wen><Arrow /></Btn></BtnSet>
        </Line>
      </Stack>
    </RibbonGroup>
    <RibbonGroup w={112} label="对齐方式" pad="4px 3px" launch>
      <Stack>
        <Line>
          <BtnSet>
            <Btn $w={22} aria-label="顶端对齐"><Bars rows={alignRows.top} /></Btn>
            <Btn $w={23} $on aria-label="垂直居中"><Bars rows={alignRows.mid} /></Btn>
            <Btn $w={22} aria-label="底端对齐"><Bars rows={alignRows.bot} /></Btn>
          </BtnSet>
          <BtnSet><Btn $w={20} $on aria-label="自动换行"><WrapIcon /></Btn></BtnSet>
        </Line>
        <Line>
          <BtnSet>
            <Btn $w={22} $on aria-label="左对齐"><Bars rows={alignRows.left} /></Btn>
            <Btn $w={23} aria-label="居中"><Bars rows={alignRows.center} /></Btn>
            <Btn $w={22} aria-label="右对齐"><Bars rows={alignRows.right} /></Btn>
          </BtnSet>
          <BtnSet $bare><Btn $w={31} aria-label="合并"><MergeIcon /><Arrow /></Btn></BtnSet>
        </Line>
        <Line>
          <BtnSet>
            <Btn $w={22} aria-label="减少缩进"><IndentIcon out /></Btn>
            <Btn $w={21} aria-label="增加缩进"><IndentIcon /></Btn>
          </BtnSet>
          <BtnSet><Btn $w={29} aria-label="方向"><OrientIcon /><Arrow /></Btn></BtnSet>
        </Line>
      </Stack>
    </RibbonGroup>
    <RibbonGroup w={88} label="数字" launch>
      <Stack>
        <Combo $w={80}><select aria-label="数字格式"><option>常规</option></select><Arrow /></Combo>
        <Line>
          <BtnSet>
            <Btn $w={33} aria-label="货币"><MoneyIcon /><Arrow /></Btn>
            <Btn $w={24}>%</Btn>
            <Btn $w={21}>,</Btn>
          </BtnSet>
        </Line>
        <Line>
          <BtnSet>
            <Btn $w={22} aria-label="增加小数位数"><Decimals><span><Arrow dir="left" c="#2f62b5" />.0</span><span>.00</span></Decimals></Btn>
            <Btn $w={22} aria-label="减少小数位数"><Decimals><span>.00</span><span><Arrow dir="right" c="#2f62b5" />.0</span></Decimals></Btn>
          </BtnSet>
        </Line>
      </Stack>
    </RibbonGroup>
    <RibbonGroup w={116} label="样式" pad="1px 6px">
      <Stack $gap={0}>
        <ListBtn><GridIcon kind="cond" />条件格式 <Arrow /></ListBtn>
        <ListBtn><GridIcon kind="table" />套用表格格式 <Arrow /></ListBtn>
        <ListBtn><GridIcon kind="style" />单元格样式 <Arrow /></ListBtn>
      </Stack>
    </RibbonGroup>
    <RibbonGroup w={68} label="单元格" pad="1px 5px">
      <Stack $gap={0}>
        <ListBtn><CellsIcon kind="ins" />插入 <Arrow /></ListBtn>
        <ListBtn><CellsIcon kind="del" />删除 <Arrow /></ListBtn>
        <ListBtn><CellsIcon kind="fmt" />格式 <Arrow /></ListBtn>
      </Stack>
    </RibbonGroup>
    <RibbonGroup w={124} label="编辑" pad="1px 4px 0 3px">
      <Stack $gap={0}>
        <BtnSet $bare><Btn $w={32}>Σ <Arrow /></Btn></BtnSet>
        <BtnSet $bare><Btn $w={30} aria-label="填充"><DownBox /><Arrow /></Btn></BtnSet>
        <BtnSet $bare><Btn $w={30} aria-label="清除"><Eraser /><Arrow /></Btn></BtnSet>
      </Stack>
      <BigBtn $w={42}><FindIcon><FunnelIcon /></FindIcon><span>排序和</span><span>筛选<Arrow /></span></BigBtn>
      <BigBtn $w={42}><FindIcon><BinocularIcon /></FindIcon><span>查找和</span><span>选择<Arrow /></span></BigBtn>
    </RibbonGroup>
  </Ribbon>
);

const FindIcon = styled.div`
  height: 38px;
  padding-top: 3px;
`;

const ExcelView = () => (
  <Excel>
    <XTitle>
      <QuickBar>
        <QuickPill><MiniButton aria-label="保存"><SaveIcon /></MiniButton></QuickPill>
        <MiniButton aria-label="自定义"><Arrow c="#b9cdf0" s={7} /></MiniButton>
      </QuickBar>
      <XName>{"2G1EJ01TA0制作单.xls  [兼容模式]  -  Microsoft Excel"}</XName>
      <WinButtons>
        <WinButton aria-label="最小化"><svg width="12" height="10"><rect y="5" x="1" width="10" height="3" fill="#fff" /></svg></WinButton>
        <WinButton aria-label="最大化"><svg width="12" height="10"><path d="M1 0H11V9H1ZM4 3V6H8V3Z" fill="#fff" fillRule="evenodd" /></svg></WinButton>
        <WinButton $close aria-label="关闭"><svg width="12" height="10"><path d="M2 1L10 9M10 1L2 9" stroke="#fff" strokeWidth="2.500" /></svg></WinButton>
      </WinButtons>
    </XTitle>
    <XBody>
      <Tabs>
        <Tab $on>开始</Tab>
        <Tab>插入</Tab>
        <Tab>页面布局</Tab>
        <Tab>公式</Tab>
        <Tab>数据</Tab>
        <Tab>审阅</Tab>
        <Tab>视图</Tab>
        <TabTools>
          <MiniButton aria-label="帮助"><HelpIcon /></MiniButton>
          <MiniButton aria-label="最小化"><svg width="8" height="9"><rect y="7" width="7" height="2" fill="#6c7686" /></svg></MiniButton>
          <MiniButton aria-label="还原"><svg width="9" height="8"><path d="M2 0H9V5H7V7H0V2H2ZM1 4V6H6V4Z" fill="#6c7686" fillRule="evenodd" /></svg></MiniButton>
          <MiniButton aria-label="关闭"><svg width="9" height="9"><path d="M1 1L8 8M8 1L1 8" stroke="#6c7686" strokeWidth="1.800" /></svg></MiniButton>
        </TabTools>
      </Tabs>
      <RibbonView />
      <FormulaBar>
        <NameBox><input aria-label="名称框" defaultValue="B29" /><Arrow c="#000" s={8} /></NameBox>
        <FxArea>
          <svg width="8" height="8"><circle cx="4" cy="4" r="4" fill="#b8c4d6" /><circle cx="5" cy="5" r="2.500" fill="#eef3fa" /></svg>
          <button>fx</button>
        </FxArea>
        <Formula aria-label="编辑栏" defaultValue="0.65" />
        <Expander aria-label="展开"><svg width="8" height="10"><path d="M1 1L4 4L7 1M1 5L4 8L7 5" stroke="#000" strokeWidth="1.500" fill="none" /></svg></Expander>
      </FormulaBar>
      <SheetArea>
        <SheetClip>
          <Sheet>
            <colgroup><col width="34" /><col width="149" /><col /><col width="41" /></colgroup>
            <thead>
              <tr><ColHead $corner aria-label="全选" /><ColHead>A</ColHead><ColHead $on>B</ColHead><ColHead $end>C</ColHead></tr>
            </thead>
            <tbody>
              {rows.map(([n, a, b, fill]) => (
                <tr key={n}>
                  <RowHead scope="row" $on={n === 29}>{n}</RowHead>
                  <CellA>{a}</CellA>
                  <CellB $fill={fill} $sel={n === 29} $tick={b === "√"}>{b}</CellB>
                  <CellC />
                </tr>
              ))}
            </tbody>
          </Sheet>
        </SheetClip>
        <VScroll>
          <VSplit />
          <Arrow dir="up" c="#2d4a80" s={9} />
          <VThumb><svg width="8" height="8"><path d="M0 .5H8M0 3H8M0 5.500H8" stroke="#5b6f8e" /></svg></VThumb>
          <Arrow c="#2d4a80" s={9} />
        </VScroll>
      </SheetArea>
      <SheetTabs>
        <NavSet>
          <NavBtn aria-label="第一张"><NavIcon end /></NavBtn>
          <NavBtn aria-label="上一张"><NavIcon /></NavBtn>
          <NavBtn aria-label="下一张"><NavIcon flip /></NavBtn>
          <NavBtn aria-label="最后一张"><NavIcon end flip /></NavBtn>
        </NavSet>
        <SheetTab>制作单</SheetTab>
        <NewSheet aria-label="插入工作表">
          <svg width="15" height="13"><rect x="5" y="4" width="9" height="8" fill="#fff" stroke="#5f7292" /><path d="M4 0V8M0 4H8M1 1L7 7M7 1L1 7" stroke="#e8962a" strokeWidth="1.200" /></svg>
        </NewSheet>
        <HScroll>
          <SplitHandle />
          <Arrow dir="left" c="#2d4a80" s={9} />
          <HThumb><svg width="8" height="8"><path d="M.5 0V8M3 0V8M5.500 0V8" stroke="#5b6f8e" /></svg></HThumb>
          <ScrollEnd>
            <Arrow dir="right" c="#2d4a80" s={9} />
            <SplitHandle />
          </ScrollEnd>
        </HScroll>
      </SheetTabs>
      <Status>
        <span>就绪</span>
        <StatusRule />
        <StatusTools>
          <ViewBtn $on aria-label="普通"><svg width="13" height="11"><path d="M0 .5H13M0 4H13M0 7.500H13M0 10.500H13M.5 0V11M4.500 0V11M8.500 0V11M12.500 0V11" stroke="#444" /></svg></ViewBtn>
          <ViewBtn aria-label="页面布局"><svg width="13" height="11"><rect x=".5" y=".5" width="12" height="10" fill="#777" stroke="#444" /><rect x="3" y="1" width="7" height="9" fill="#fff" /><path d="M4 3.500H9M4 5.500H9M4 7.500H9" stroke="#777" /></svg></ViewBtn>
          <ViewBtn aria-label="分页预览"><svg width="13" height="11"><rect x=".5" y=".5" width="12" height="10" fill="#777" stroke="#444" /><path d="M1 1H4V7H1ZM5 1H8V7H5Z" fill="#fff" /></svg></ViewBtn>
          <ZoomText>100%</ZoomText>
          <RoundBtn aria-label="缩小"><svg width="8" height="8"><rect y="3" width="8" height="2" fill="#444" /></svg></RoundBtn>
          <Zoom type="range" min="0" max="100" defaultValue="50" aria-label="显示比例" />
          <RoundBtn aria-label="放大"><svg width="8" height="8"><path d="M3 0H5V3H8V5H5V8H3V5H0V3H3Z" fill="#444" /></svg></RoundBtn>
          <Grip width="12" height="12" viewBox="0 0 12 12"><path d="M9 1h2v2H9zM5 5h2v2H5zM9 5h2v2H9zM1 9h2v2H1zM5 9h2v2H5zM9 9h2v2H9z" fill="#3f64a4" /></Grip>
        </StatusTools>
      </Status>
    </XBody>
    <OfficeOrb aria-label="Office"><OfficeLogo /></OfficeOrb>
  </Excel>
);

const menu: [string, string, string][] = [
  ["", "F", "ile"], ["", "E", "dit"], ["", "A", "ctions"], ["O", "p", "tions"],
  ["Analysis", "", ""], ["DFM", "", ""], ["", "S", "tep"], ["", "R", "out"], ["", "W", "indows"],
];

export default function App() {
  return (
    <Desktop>
      <Global />
      <EditorTitle>
        <svg width="16" height="14" viewBox="0 0 16 14">
          <rect x=".5" y="0" width="15" height="13.500" fill="#f4f4e8" stroke="#222" />
          <rect x="1" y="0" width="14" height="2" fill="#1a2a7a" />
          <path d="M4 4L12 12M12 4L4 12" stroke="#c8b400" strokeWidth="2.200" />
          <path d="M7 4H12" stroke="#5a6a20" />
        </svg>
        <EditorName>Graphic Editor 9.07b2 (00@HY-HYCAM-PC189 - Windows, pid:9088)</EditorName>
      </EditorTitle>
      <TopBars>
        <MenuBar>
          {menu.map(([a, k, b]) => (
            <MenuButton key={a + k + b}>{a}{k && <u>{k}</u>}{b}</MenuButton>
          ))}
          <MenuButton $last>Help</MenuButton>
        </MenuBar>
        <LogoPanel>
          <LogoMark>
            <svg width="20" height="26" viewBox="0 0 20 26">
              <path d="M4 3L20 1L19 5L14 4ZM3 9L18 7L17 12L12 10ZM1 16L17 14L16 18L10 17ZM0 23L16 20L15 25L9 24Z" fill="#e8140c" />
            </svg>
            Fr
            <svg width="21" height="21" viewBox="0 0 21 21">
              <circle cx="10.500" cy="10.500" r="9" fill="none" stroke="#04047c" strokeWidth="2" />
              <path d="M10.500 6.500L14.500 10.500L10.500 14.500L6.500 10.500Z" fill="#f01408" />
            </svg>
            ntline
          </LogoMark>
          <LogoText>
            <Product>Genesis</Product>
            <ProductSub>Graphic Editor</ProductSub>
          </LogoText>
        </LogoPanel>
      </TopBars>
      <Work>
        <Sidebar>
          <JobPanel>
            <JobLine>Job : 2g1ej01ta0</JobLine>
            <JobLine>Step: set</JobLine>
            <MatrixFrame><MatrixButton>Job Matrix ...</MatrixButton></MatrixFrame>
          </JobPanel>
          <LayerWell>
            <LayerFrame>
              {layerGroups.map((g, i) => (
                <LayerGroup key={i}>
                  {g.map((l) => (
                    <LayerRow key={l.n}>
                      <LayerCheck type="checkbox" id={`layer-${l.n}`} $active={l.n === "fzkdrl"} />
                      <Swatch $color={l.c || "#000"} />
                      <LayerName htmlFor={`layer-${l.n}`} $bg={l.bg || teal}>
                        {l.n}
                        {l.mark === "hand" && <HandMark />}
                        {l.mark === "grid" && <GridMark />}
                      </LayerName>
                    </LayerRow>
                  ))}
                </LayerGroup>
              ))}
            </LayerFrame>
          </LayerWell>
        </Sidebar>
        <BoardView />
      </Work>
      <ExcelView />
      <RedMark />
    </Desktop>
  );
}
